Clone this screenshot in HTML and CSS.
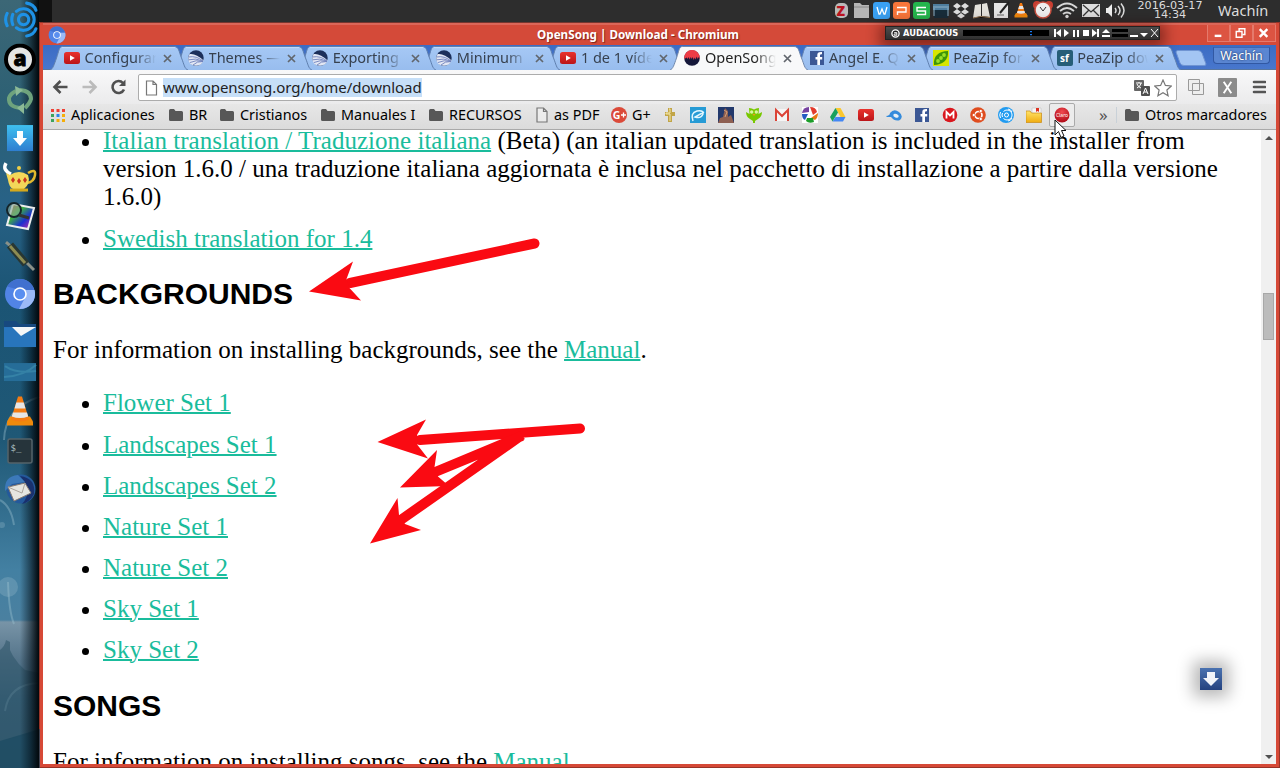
FILE: index.html
```html
<!DOCTYPE html>
<html lang="es">
<head>
<meta charset="utf-8">
<title>OpenSong | Download - Chromium</title>
<link rel="stylesheet" href="styles.css">
</head>
<body>
<svg width="0" height="0" class="defs">
  <defs>
    <linearGradient id="tabg" x1="0" y1="0" x2="0" y2="1"><stop offset="0" stop-color="#a6c8f5"/><stop offset="1" stop-color="#98bdee"/></linearGradient>
    <linearGradient id="yt" x1="0" y1="0" x2="0" y2="1"><stop offset="0" stop-color="#e9322d"/><stop offset="1" stop-color="#bb1519"/></linearGradient>
    <radialGradient id="claro" cx=".5" cy=".3" r=".7"><stop offset="0" stop-color="#f04a50"/><stop offset="1" stop-color="#b00a16"/></radialGradient>
    <linearGradient id="gold" x1="0" y1="0" x2="0" y2="1"><stop offset="0" stop-color="#ffe46a"/><stop offset="1" stop-color="#f0ac10"/></linearGradient>
    <linearGradient id="rain" x1="0" y1="0" x2="1" y2="1"><stop offset="0" stop-color="#e42a1c"/><stop offset=".35" stop-color="#3eb53a"/><stop offset=".65" stop-color="#1b2fd0"/><stop offset="1" stop-color="#e62ba0"/></linearGradient>
    <linearGradient id="sky" x1="0" y1="0" x2="0" y2="1"><stop offset="0" stop-color="#3fc0f0"/><stop offset="1" stop-color="#2e7ed0"/></linearGradient>
    <linearGradient id="navy" x1="0" y1="0" x2="0" y2="1"><stop offset="0" stop-color="#4a72b0"/><stop offset="1" stop-color="#24427f"/></linearGradient>
    <symbol id="tab" viewBox="0 0 138 24"><path d="M0 24C3 23 4 19 6.500 12S9 .5 12.500 .5H124C129 .5 129 6 131.500 12s3 11 6.500 12" fill="url(#tabg)" stroke="#5f7fae"/><path d="M12 1.600H125" stroke="#c2dafb" fill="none"/></symbol>
    <symbol id="tabon" viewBox="0 0 138 24"><path d="M0 24C3 23 4 19 6.500 12S9 .5 12.500 .5H124C129 .5 129 6 131.500 12s3 11 6.500 12" fill="#f8f9fa" stroke="#7088ac"/><path d="M2 24H136" stroke="#f8f9fa" stroke-width="2"/></symbol>
    <symbol id="x" viewBox="0 0 9 9"><path d="M1 1l7 7M8 1l-7 7" stroke="#61666d" stroke-width="1.700"/></symbol>
    <symbol id="youtube" viewBox="0 0 16 16"><rect y="2" width="16" height="12" rx="2.500" fill="url(#yt)"/><path d="M6 5.200v5.600L10.800 8z" fill="#fff"/></symbol>
    <symbol id="globe" viewBox="0 0 16 16"><circle cx="8" cy="8" r="7.700" fill="#1c2f5a"/><path d="M1.500 4Q8 3 15.600 10.500 13.500 15.700 8 15.700 0 15.500 .3 7.500z" fill="#e2e7f4"/><path d="M.5 7q8-1.500 14.500 4M.8 9.800q7-2 14 1.200M2 12.500q6-3 13-1M5 15q4-4 10-3.500" stroke="#6d80bb" fill="none" stroke-width=".9"/></symbol>
    <symbol id="song" viewBox="0 0 16 16"><circle cx="8" cy="8" r="7.800" fill="#15183a"/><path d="M.3 9A7.800 7.800 0 1 1 15.700 9l-1-2-1 2-1-2.500-1 3-1-2-1 2.500-1-3-1 2-1-2-1 2.500-1-2.500-1 2-1-1.500z" fill="#ee3c46"/></symbol>
    <symbol id="fb" viewBox="0 0 16 16"><rect x="1" y="1" width="14" height="14" fill="#3b5794"/><path d="M11 15V9.500h2.200V7H11V5.500c0-1 .4-1.300 2-1.300V2C9.500 1.700 8.300 3 8.300 5v2H6.500v2.500h1.800V15z" fill="#fff"/></symbol>
    <symbol id="pea" viewBox="0 0 16 16"><path fill="#d7e500" d="M0 0h16v16H0z"/><path d="M1 15C0 6 6 1 15 1 16 10 9 15 1 15z" fill="#3e9508"/><circle cx="5" cy="11" r="1.900" fill="#9ae027"/><circle cx="8" cy="8" r="1.900" fill="#9ae027"/><circle cx="11" cy="5" r="1.900" fill="#9ae027"/></symbol>
    <symbol id="sf" viewBox="0 0 16 16"><rect width="16" height="16" rx="2" fill="#265e78"/><text x="3" y="11.500" font-size="10" font-weight="bold" fill="#fff">sf</text></symbol>
    <symbol id="folder" viewBox="0 0 16 14"><path d="M1 2.500Q1 1 2.500 1H6l1.500 2H13.500Q15 3 15 4.500V11.500Q15 13 13.500 13H2.500Q1 13 1 11.500z" fill="#575757"/></symbol>
    <symbol id="page" viewBox="0 0 12 16"><path d="M1 1h6.500L11 4.500V15H1zM7.500 1v3.500H11" fill="#fff" fill-opacity=".35" stroke="#777" stroke-width="1.200"/></symbol>
    <symbol id="chromium" viewBox="0 0 32 32"><circle cx="16" cy="16" r="15" fill="#5184e6"/><path d="M3 8.500A15 15 0 0 1 29 8.500L30 12H16z" fill="#4070cf"/><path d="M30.500 12A15 15 0 0 1 15 31l7-13-1-6z" fill="#9bbaf7"/><circle cx="16" cy="16" r="6.800" fill="#fff"/><circle cx="16" cy="16" r="5.200" fill="#5a8ff0"/></symbol>
    <symbol id="aring" viewBox="0 0 32 32"><circle cx="16" cy="16" r="14" fill="#e5e5e5" stroke="#000" stroke-width="4"/><text x="16" y="22" text-anchor="middle" font-size="21" font-weight="900" fill="#000" stroke="#000" stroke-width=".8">a</text></symbol>
    <symbol id="cone" viewBox="0 0 28 30"><path d="M1 25l3-5h20l3 5v4H1z" fill="#ef8a0c"/><path d="M12 0h4l7 23q-9 4-18 0z" fill="#f57c13"/><path d="M10.300 6h7.400l1.800 6h-11zM7 16h14l1.200 4q-8.200 3-16.400 0z" fill="#e6e6e6"/></symbol>
    <symbol id="waves" viewBox="0 0 34 36"><g fill="none" stroke="#1e92e6"><circle cx="20" cy="18" r="5" stroke-width="3"/><path d="M13 10a10.500 10.500 0 1 1 0 16M9.500 13q-2 5 0 10M23 2q7 1 9 7M23 34q7-1 9-7M4 12q-3 6 0 12" stroke-width="3" stroke-linecap="round"/></g></symbol>
  </defs>
</svg>

<div class="desktop">
  <aside class="dock">
    <svg class="deco" viewBox="0 0 40 768"><g fill="none" stroke="#9cc0d0" stroke-opacity=".4" stroke-width="2"><path d="M39 397Q5 408 4 440M0 500q11 6 14 25M5 711Q9 684 39 683M8 582q1 30 6 42"/></g><g fill="#a1c1d0" fill-opacity=".28"><circle cx="8" cy="587" r="10"/><circle cx="2" cy="525" r="3"/></g><path d="M0 650q5-4 6-10l4 2v8l3 6q5 8 12 14l14 3v60L0 741z" fill="#31566b" fill-opacity=".6"/><path d="M0 741l40-12v39H0z" fill="#194960" fill-opacity=".7"/></svg>
    <div class="shade"></div>
    <svg viewBox="0 0 40 39"><use href="#waves" x="3" y="1" width="35" height="37"/></svg>
    <svg viewBox="0 0 40 39"><use href="#aring" x="4" y="4.500" width="32" height="32"/></svg>
    <svg viewBox="0 0 40 39"><g fill="none" stroke="#6ea37d" stroke-width="4"><path d="M21 30Q8 29 9 20q1-4 7-7"/><path d="M20 12q11 1 11 9-1 4-6 9"/></g><path d="M15 8l8 4-7 6zM24 36l-7-6 7-5z" fill="#8cba96"/></svg>
    <svg viewBox="0 0 40 39"><rect x="7" y="8" width="26" height="26" fill="url(#sky)"/><path d="M17 14h6v7h4l-7 8-7-8h4z" fill="#fff"/></svg>
    <svg viewBox="0 0 40 39"><path d="M11 18Q2 14 6 7" stroke="#fff" stroke-width="3.500" fill="none"/><path d="M28 17q8-5 7 2t-8 8" stroke="#e0b92e" stroke-width="2.500" fill="none"/><path d="M6 17l4 2q9-6 18 0 3 8-4 14H13Q9 31 8 24z" fill="#f3d759"/><circle cx="19" cy="12" r="2" fill="#f0cf45"/><path d="M10 34h18" stroke="#d4a91d" stroke-width="3"/><path d="M13 21l2 3-2 3-2-3zM19 22l2 3-2 3-2-3zM25 21l2 3-2 3-2-3z" fill="#c9341f"/></svg>
    <svg viewBox="0 0 40 39"><path d="M13 9l21 4-6 21-21-4z" fill="url(#rain)" stroke="#eee" stroke-width="2"/><circle cx="14" cy="15" r="7" fill="#8a9" fill-opacity=".6" stroke="#15252a" stroke-width="2"/><path d="M19 20l10 3" stroke="#333" stroke-width="3"/></svg>
    <svg viewBox="0 0 40 39"><path d="M6 7l7 6M26 27l8 8" stroke="#8a9189" stroke-width="3"/><path d="M10 10l16 19" stroke="#283733" stroke-width="8"/><path d="M10 11l15 17" stroke="#8d8c52" stroke-width="3"/></svg>
    <svg viewBox="0 0 40 39"><use href="#chromium" x="4" y="4" width="32" height="32"/></svg>
    <svg viewBox="0 0 40 39"><path d="M4 8h12l3 3h17v5H4z" fill="#17497f"/><path fill="#2875bc" d="M4 14h32v20H4z"/><path d="M12 14h24l-15 9z" fill="#f4f6f7"/></svg>
    <svg viewBox="0 0 40 39"><path fill="#266d98" d="M4 11h32v18H4z"/><path d="M4 25q20-1 32-12M5 14q12 8 31 5" stroke="#3582a6" fill="none" stroke-width="2"/></svg>
    <svg viewBox="0 0 40 39"><use href="#cone" x="6" y="5" width="28" height="31"/></svg>
    <svg viewBox="0 0 40 39"><rect x="8" y="9" width="24" height="24" rx="2" fill="#26343b" stroke="#54636a" stroke-width="1.500"/><text x="10.500" y="21" font-size="9" fill="#b1c2c5" font-family="DejaVu Sans Mono, monospace">$_</text></svg>
    <svg viewBox="0 0 40 39"><circle cx="21" cy="20" r="14.500" fill="#24599b"/><path d="M20 7q16 2 14 18-4 8-12 10 12-13-2-28z" fill="#19316e"/><path d="M5 22Q4 7 18 6l7 7-13 2z" fill="#3c79b9"/><path d="M8 18l17-4 6 10-17 8z" fill="#e5e5e0" stroke="#897c72"/><path d="M8 18l14 6 3-10" fill="none" stroke="#aaa39b"/></svg>
  </aside>

  <header class="panel">
    <div class="tray">
      <svg viewBox="0 0 20 22"><rect x="4" y="3" width="13" height="15" rx="5" fill="#b9b9b9"/><text x="5.500" y="16" font-size="14" font-weight="900" fill="#b9121e">Z</text></svg>
      <svg viewBox="0 0 20 22"><path d="M3 3h6l2 2h7v13H3z" fill="#b5b5b5"/><path d="M3 7h15" stroke="#888"/></svg>
      <svg viewBox="0 0 20 22"><rect x="2" y="2" width="17" height="17" rx="3" fill="#39a0f2"/><path d="M6 7l2 7h1l2-5 2 5h1l2-7" fill="none" stroke="#fff" stroke-width="1.300"/></svg>
      <svg viewBox="0 0 20 22"><rect x="2" y="2" width="17" height="17" rx="3" fill="#f9763a"/><path d="M6 7.500h9V12H6.500v3" fill="none" stroke="#fff" stroke-width="1.400"/></svg>
      <svg viewBox="0 0 20 22"><rect x="2" y="2" width="17" height="17" rx="3" fill="#24b64d"/><path d="M15 7.500H6V11h8.500v3.500H6" fill="none" stroke="#fff" stroke-width="1.400"/></svg>
      <svg viewBox="0 0 20 22"><path fill="#4e7d9d" d="M2 4h16v6H2z"/><path fill="#172d3a" d="M3 10h14v8H3z"/><path d="M2 7h16M3 16V8M17 16V8" stroke="#8fb2c7"/></svg>
      <svg viewBox="0 0 20 22"><path d="M6 3l4 3-4 3-4-3zM14 3l4 3-4 3-4-3zM6 9l4 3-4 2.500L2 12zM14 9l4 3-4 2.500-4-2.500zM10 13l4 3-4 2.500L6 16z" fill="#ddd"/></svg>
      <svg viewBox="0 0 20 22"><path d="M4 5l6-1v12l-8 2zM11 4l5-1 3 14-8-1z" fill="#e4e2dc"/><path d="M2 18l8-1.500 9 1" stroke="#9b7e5a"/></svg>
      <svg viewBox="0 0 20 22"><rect x="3" y="3" width="14" height="15" fill="#e5e5e5"/><path d="M6 15h7" stroke="#666"/><path d="M18 2l-9 11" stroke="#222" stroke-width="2"/></svg>
      <svg viewBox="0 0 20 22"><use href="#cone" x="3" y="2" width="14" height="17"/></svg>
      <svg viewBox="0 0 24 22"><circle cx="6" cy="5" r="4" fill="#c83e31"/><circle cx="18" cy="5" r="4" fill="#c83e31"/><circle cx="12" cy="10" r="8" fill="#eee" stroke="#c95040" stroke-width="1.500"/><path d="M9 7l3 4 3-4" stroke="#333" fill="none"/></svg>
      <svg viewBox="0 0 24 22"><g fill="none" stroke="#d7d7d7" stroke-width="1.800"><path d="M2 8q10-9 20 0M5 11q7-6 14 0M8 14q4-3 8 0"/></g><circle cx="12" cy="16.500" r="1.700" fill="#ddd"/></svg>
      <svg viewBox="0 0 24 22"><rect x="3" y="4" width="18" height="13" fill="#ddd"/><path d="M4 5l8 7 8-7M4 16l6-6M20 16l-6-6" fill="none" stroke="#333" stroke-width="1.300"/></svg>
      <svg viewBox="0 0 24 22"><path d="M3 8h2l4-4v13l-4-4H3z" fill="#eee"/><path d="M12 8q2 2.500 0 5M15 6q4 4.500 0 9M18 3.500q6 7 0 14" fill="none" stroke="#ddd" stroke-width="1.500"/></svg>
    </div>
    <div class="clock">2016-03-17<br>14:34</div>
    <div class="user">Wachín</div>
  </header>

  <main class="window">
    <div class="titlebar">
      <svg class="appicon" viewBox="0 0 32 32"><use href="#chromium"/></svg>
      <div class="title">OpenSong | Download - Chromium</div>
      <div class="winbtns">
        <span><svg viewBox="0 0 22 16"><path d="M7 11h7" stroke="#fff" stroke-width="2.500"/></svg></span>
        <span><svg viewBox="0 0 22 16"><path d="M8.500 6V3.500h6v6H12" fill="none" stroke="#fff" stroke-width="1.500"/><path d="M5.500 6.500h6v6h-6z" fill="none" stroke="#fff" stroke-width="1.500"/></svg></span>
        <span><svg viewBox="0 0 22 16"><path d="M6 4l8 8M14 4l-8 8" stroke="#fff" stroke-width="2.500"/></svg></span>
      </div>
    </div>
    <nav class="tabs">
      <div class="tab"><svg class="shape"><use href="#tab"/></svg><svg class="fav"><use href="#youtube"/></svg><span>Configurar</span><svg class="close"><use href="#x"/></svg></div>
      <div class="tab"><svg class="shape"><use href="#tab"/></svg><svg class="fav"><use href="#globe"/></svg><span>Themes — </span><svg class="close"><use href="#x"/></svg></div>
      <div class="tab"><svg class="shape"><use href="#tab"/></svg><svg class="fav"><use href="#globe"/></svg><span>Exporting</span><svg class="close"><use href="#x"/></svg></div>
      <div class="tab"><svg class="shape"><use href="#tab"/></svg><svg class="fav"><use href="#globe"/></svg><span>Minimum</span><svg class="close"><use href="#x"/></svg></div>
      <div class="tab"><svg class="shape"><use href="#tab"/></svg><svg class="fav"><use href="#youtube"/></svg><span>1 de 1 víde</span><svg class="close"><use href="#x"/></svg></div>
      <div class="tab on"><svg class="shape"><use href="#tabon"/></svg><svg class="fav"><use href="#song"/></svg><span>OpenSong</span><svg class="close"><use href="#x"/></svg></div>
      <div class="tab"><svg class="shape"><use href="#tab"/></svg><svg class="fav"><use href="#fb"/></svg><span>Angel E. Q</span><svg class="close"><use href="#x"/></svg></div>
      <div class="tab"><svg class="shape"><use href="#tab"/></svg><svg class="fav"><use href="#pea"/></svg><span>PeaZip for</span><svg class="close"><use href="#x"/></svg></div>
      <div class="tab"><svg class="shape"><use href="#tab"/></svg><svg class="fav"><use href="#sf"/></svg><span>PeaZip dow</span><svg class="close"><use href="#x"/></svg></div>
      <svg class="newtab" viewBox="0 0 32 16"><path d="M3 .5H23Q26 .5 27 3L31 14Q31 15.500 29 15.500H9Q6 15.500 5 13L1 2Q1 .5 3 .5z" fill="#a3c5f3" stroke="#6f94d2"/></svg>
      <button class="profile">Wachín</button>
    </nav>
    <div class="toolbar">
      <svg class="tb" viewBox="0 0 16 16"><path d="M15 8H3M8 2L2 8l6 6" fill="none" stroke="#505050" stroke-width="2.600"/></svg>
      <svg class="tb" viewBox="0 0 16 16"><path d="M1 8h12M8 2l6 6-6 6" fill="none" stroke="#bbb" stroke-width="2.600"/></svg>
      <svg class="tb" viewBox="0 0 16 16"><path d="M13.500 10.500A6 6 0 1 1 12.500 4" fill="none" stroke="#505050" stroke-width="2.600"/><path d="M15 .5V7H8.500z" fill="#505050"/></svg>
      <div class="omnibox">
        <svg class="pg"><use href="#page"/></svg>
        <span class="url">www.opensong.org/home/download</span>
        <svg class="trans" viewBox="0 0 16 16"><rect width="10" height="11" rx="1" fill="#666"/><path d="M2 3h6M5 2v1M3 8q4-2 4-5M3 4q1 3 4 4" stroke="#fff" fill="none"/><rect x="7" y="6" width="9" height="10" rx="1" fill="#4f4f4f"/><path d="M9 14l2.500-6 2.500 6M10 12h3" fill="none" stroke="#fff"/></svg>
        <svg class="star" viewBox="0 0 18 18"><path d="M9 1l2.400 5.400 5.900.6-4.400 4 1.200 5.800L9 13.800l-5.100 3 1.200-5.800-4.400-4 5.900-.6z" fill="#fff" stroke="#777" stroke-width="1.200"/></svg>
      </div>
      <svg class="copy" viewBox="0 0 16 16"><path d="M.5.5h11v11H.5zM4.500 4.500h11v11h-11z" fill="#eee" stroke="#999"/></svg>
      <svg class="xext" viewBox="0 0 20 20"><rect width="20" height="20" rx="1" fill="#8b8b8b"/><path d="M6 4l8 12M14 4L6 16" stroke="#fff" stroke-width="2"/></svg>
      <svg class="menu" viewBox="0 0 14 14"><path d="M2 2h11M2 7h11M2 12h11" stroke="#555" stroke-width="2.600" stroke-linecap="round"/></svg>
    </div>
    <div class="bookmarks">
      <div class="bm w1"><svg viewBox="0 0 16 16"><path fill="#ee4035" d="M1 2h3v3H1zM6.500 2h3v3h-3zM12 2h3v3h-3z"/><path fill="#3da35d" d="M1 7h3v3H1zM1 12h3v3H1z"/><path fill="#2a85e8" d="M6.500 7h3v3h-3z"/><path fill="#f5ae08" d="M12 7h3v3h-3zM6.500 12h3v3h-3zM12 12h3v3h-3z"/></svg>Aplicaciones</div>
      <div class="bm w2"><svg><use href="#folder"/></svg>BR</div>
      <div class="bm w3"><svg><use href="#folder"/></svg>Cristianos</div>
      <div class="bm w4"><svg><use href="#folder"/></svg>Manuales I</div>
      <div class="bm w4"><svg><use href="#folder"/></svg>RECURSOS</div>
      <div class="bm w6"><svg class="doc"><use href="#page"/></svg>as PDF</div>
      <div class="bm w7"><svg viewBox="0 0 16 16"><circle cx="8" cy="8" r="8" fill="#db4a39"/><text x="1.700" y="12" font-size="10.500" font-weight="bold" fill="#fff">G</text><path d="M10 8h5M12.500 5.500v5" stroke="#fff" stroke-width="1.300"/></svg>G+</div>
      <div class="icons">
        <svg viewBox="0 0 16 16"><path d="M6 1h4v4h3v4h-3v6H6V9H3V5h3z" fill="#c1a548"/><path d="M7 2h1v4H4v1h4v7" fill="none" stroke="#f4e7a6"/></svg>
        <svg viewBox="0 0 16 16"><path fill="#269bd5" d="M0 0h16v16H0z"/><path d="M3 14Q0 6 7 4q7-1 6 3-2 5-8 3l9-5" fill="none" stroke="#e2f7ff" stroke-width="1.500"/></svg>
        <svg viewBox="0 0 16 16"><path fill="#23396c" d="M0 0h16v16H0z"/><path d="M0 16l2-5 3-1 2-9 3 3v6l3-2 3 8z" fill="#8e6052"/><path d="M6 3l3 2-2 5" stroke="#d5a078" fill="none"/></svg>
        <svg viewBox="0 0 16 16"><path d="M3 1q3 0 5 1.500Q10 1 13 1l-.5 6L16 5q0 5-4 7l-3 2v2H7v-2l-3-2Q0 10 0 5l3.500 2z" fill="#78c800"/><circle cx="5.700" cy="5" r="1.700" fill="#d9f6a1"/><circle cx="10.300" cy="5" r="1.700" fill="#d9f6a1"/><path d="M6.500 7h3L8 9z" fill="#f5981d"/></svg>
        <svg viewBox="0 0 16 16"><path fill="#f5f5f5" d="M1 2h14v12H1z"/><path d="M2 14V3l6 6 6-6v11" fill="none" stroke="#db4437" stroke-width="2"/></svg>
        <svg viewBox="0 0 16 16"><path fill="#fff" d="M0 0h16v16H0z"/><path d="M7 0Q1 0 0 6l7-1z" fill="#7642a0"/><path d="M8 0q6 0 7 5l-4 3z" fill="#e23b2d"/><path d="M16 6q0 5-3 7L9 11z" fill="#e87813"/><path d="M12 15q-5 2-8-1l1-3h6z" fill="#1c9d2a"/><path d="M0 7q0 5 3 6l3-6z" fill="#245bc2"/></svg>
        <svg viewBox="0 0 16 16"><path d="M5.500 1h5l5 9h-5z" fill="#fbc72f"/><path d="M5.500 1L0 10l2.500 4.500L8 5.500z" fill="#18a05e"/><path d="M5.500 10h10L13 14.500H2.500z" fill="#4487f4"/></svg>
        <svg><use href="#youtube"/></svg>
        <svg viewBox="0 0 16 16"><path d="M0 9q4-.5 4-3 4-5 9-1 5 4 1 8-5 2-9-3H1z" fill="#348bdc"/><ellipse cx="10" cy="8.800" rx="2.800" ry="1.800" fill="#e8f0f6" transform="rotate(20 10 8.800)"/></svg>
        <svg><use href="#fb"/></svg>
        <svg viewBox="0 0 16 16"><circle cx="8" cy="8" r="7.300" fill="#d9171e"/><path d="M4.500 11.500V5L8 8.500 11.500 5v6.500" stroke="#fff" stroke-width="1.800" fill="none"/></svg>
        <svg viewBox="0 0 16 16"><circle cx="8" cy="8" r="7.800" fill="#df4c1e"/><circle cx="8.500" cy="8" r="3.500" fill="none" stroke="#fff" stroke-width="1.700"/><g fill="#fff" stroke="#df4c1e" stroke-width=".7"><circle cx="3.800" cy="8" r="1.600"/><circle cx="10.800" cy="4" r="1.600"/><circle cx="10.800" cy="12" r="1.600"/></g></svg>
        <svg viewBox="0 0 16 16"><circle cx="8" cy="8" r="8" fill="#219bf0"/><g fill="none" stroke="#fff"><circle cx="8.500" cy="8" r="2"/><path d="M5.500 4.500a5 5 0 1 1 0 7M4.500 6q-1 2 0 4M2.500 5q-1.500 3 0 6M10 2q3 .5 4 3M10 14q3-.5 4-3"/></g></svg>
        <svg viewBox="0 0 16 16"><path d="M6 1h9v8H6z" fill="#f6f6f6" stroke="#bbb" stroke-width=".5"/><path d="M10 1h3v4l-1.500-1L10 5z" fill="#d32"/><path d="M0 4h4l1.500 2H15.500v9.500H0z" fill="url(#gold)" stroke="#c88a16" stroke-width=".7"/></svg>
        <span class="hover"><svg viewBox="0 0 16 16"><circle cx="8" cy="8" r="7.500" fill="url(#claro)"/><text x="8" y="10" text-anchor="middle" font-size="5" fill="#fff">Claro</text></svg></span>
      </div>
      <div class="more">»</div>
      <div class="bm other"><svg><use href="#folder"/></svg>Otros marcadores</div>
    </div>
    <div class="view">
      <article class="page">
        <ul class="tr">
          <li><span class="l1"><a>Italian translation / Traduzione italiana</a> (Beta) (an italian updated translation is included in the installer from</span><br>version 1.6.0 / una traduzione italiana aggiornata è inclusa nel pacchetto di installazione a partire dalla versione<br>1.6.0)</li>
          <li><a>Swedish translation for 1.4</a></li>
        </ul>
        <h2>BACKGROUNDS</h2>
        <p>For information on installing backgrounds, see the <a>Manual</a>.</p>
        <ul class="sets">
          <li><a>Flower Set 1</a></li>
          <li><a>Landscapes Set 1</a></li>
          <li><a>Landscapes Set 2</a></li>
          <li><a>Nature Set 1</a></li>
          <li><a>Nature Set 2</a></li>
          <li><a>Sky Set 1</a></li>
          <li><a>Sky Set 2</a></li>
        </ul>
        <h2>SONGS</h2>
        <p>For information on installing songs, see the <a>Manual</a>.</p>
      </article>
      <div class="scroll"><i class="up"></i><b></b><i class="down"></i></div>
    </div>
  </main>

  <div class="player"><svg class="pa" viewBox="0 0 10 10"><circle cx="5" cy="5" r="4" fill="#222" stroke="#fff" stroke-width="1.500"/><path d="M3.500 4h3v3h-3V5.500h3" fill="none" stroke="#fff"/></svg><strong>AUDACIOUS</strong><span class="lcd"><svg viewBox="0 0 86 6"><path d="M67 1h2v1.300h-2zM67 4h2v1.300h-2z" fill="#1978f0"/></svg></span><svg class="ctl" viewBox="0 0 106 12"><path d="M1 2h2v8H1zM8 2v8L3 6zM11 2l5 4-5 4zM20 3h2v7h-2zM24 3h2v7h-2zM30 3h6v6h-6zM39 2l5 4-5 4zM44 2h2v8h-2zM49 6l4-4 4 4zM49 8h8v2h-8z" fill="#fff"/><path fill="#000" d="M59 2h16v3H59zM59 7h16v3H59z"/><path d="M77 8h8v2h-8zM87 6h8l-4 4z" fill="#fff"/><path d="M98 2l7 8M105 2l-7 8" stroke="#fff"/></svg></div>

  <svg class="arrows" viewBox="0 0 1280 768">
    <g stroke="#fa0a12" stroke-width="10"><path stroke-linecap="round" d="M350 283L534.500 243.500M420 440L580 428.500"/><path d="M434 472.500L522 436M400 520.500L522 435"/></g>
    <path fill="#fa0a12" d="M309 291.500l44-30-6.500 17.500 3 9 11.500 12.500zM377.500 442l48.500-22.500-9 15.500.5 10 10.500 13.500zM400 487.500l37-37.500-2.500 17 3.500 9.500 11 9.500zM370 543.500l27.500-45.500 1.500 17 6 9 16 6z"/>
  </svg>
  <div class="jump"><svg viewBox="0 0 22 22"><path fill="url(#navy)" d="M0 0h22v22H0z"/><path d="M7 4h8v6h4l-8 8-8-8h4z" fill="#f1f4f9"/></svg></div>
  <svg class="cursor" viewBox="0 0 14 20"><path d="M1 1v15l3.500-3.500L7 18.500l3-1.500-2.500-5.500H12z" fill="#fff" stroke="#111"/></svg>
</div>
</body>
</html>
```
FILE: styles.css
```css
* { box-sizing: border-box; }
body { margin: 0; font-family: "Noto Sans", sans-serif; }
.defs { position: absolute; }
svg { display: block; flex: none; }
.desktop { position: relative; width: 1280px; height: 768px; overflow: hidden; display: grid; grid-template-columns: 39px 1241px; grid-template-rows: 22px 746px; background: #111; }

.dock { position: relative; grid-row: 1 / 3; display: flex; flex-direction: column; background: linear-gradient(#3c6776 0, #2c6074 110px, #286286 200px, #1b5474 300px, #1f5876 440px, #4380a2 570px, #4a80a0 620px, #7894a7 622px, #54748a 660px, #38617a 700px, #32596e 768px); }
.dock svg { position: relative; width: 40px; height: 39.1px; overflow: visible; }
.dock .deco { position: absolute; left: 0; top: 0; height: 768px; }
.shade { position: absolute; inset: 0; background: linear-gradient(90deg, transparent 20px, rgba(0,12,20,.5) 30px, #02080c 39px); }

.panel { margin-left: 13px; display: flex; background: #2d2d2d; color: #dcdcdc; position: relative; }
.tray { display: flex; margin-left: 779px; }
.tray svg { width: 20px; height: 22px; }
.tray svg:nth-child(n+11) { width: 24px; }
.clock { width: 84px; margin-left: 1px; margin-top: 1px; font-size: 11.200px; line-height: 9px; text-align: center; font-family: "DejaVu Sans", sans-serif; }
.user { margin-left: 6px; font-size: 14.600px; line-height: 20px; }

.window { background: #d44a39; border-left: 4px solid #d64937; border-right: 4px solid #d64937; border-bottom: 4px solid #d64937; box-shadow: inset 0 1px #8e3127, inset 0 2px #e2796b; outline: 1px solid #973327; outline-offset: -1px; display: flex; flex-direction: column; min-height: 0; }
.titlebar { height: 23px; display: flex; align-items: center; position: relative; box-shadow: inset 0 1px #75362f, inset 0 3px #dc6658; }
.appicon { width: 18px; height: 18px; margin-left: 5px; margin-top: 2px; }
.title { flex: 1; text-align: center; color: #fff; font-size: 11.700px; font-weight: bold; text-shadow: 1px 1px 1px #7c241a; line-height: 20px; margin-right: -64px; }
.winbtns { display: flex; margin-left: 61px; }
.winbtns span { width: 23px; height: 17px; border: 1px solid #e57a6c; border-top: 0; background: #dc5442; }
.winbtns svg { width: 21px; height: 16px; }

.tabs { height: 25px; padding: 1px 0 0 9px; display: flex; position: relative; background: linear-gradient(#3b6cc4, #4877cd); box-shadow: inset 0 -1px #58779f; }
.tab { position: relative; width: 124.100px; height: 24px; display: flex; align-items: center; padding-left: 12px; font-size: 14.500px; color: #37414f; }
.tab:nth-child(1) { z-index: 9; } .tab:nth-child(2) { z-index: 8; } .tab:nth-child(3) { z-index: 7; } .tab:nth-child(4) { z-index: 6; } .tab:nth-child(5) { z-index: 5; } .tab:nth-child(7) { z-index: 4; } .tab:nth-child(8) { z-index: 3; } .tab:nth-child(9) { z-index: 2; }
.tab.on { z-index: 20; color: #222; }
.shape { position: absolute; left: -2px; top: 0; width: 138px; height: 24px; }
.fav { position: relative; width: 16px; height: 16px; }
.tab span { position: relative; top: -1px; width: 71px; margin-left: 4.500px; overflow: hidden; white-space: pre; -webkit-mask-image: linear-gradient(90deg, #000 70%, transparent); mask-image: linear-gradient(90deg, #000 70%, transparent); }
.close { position: relative; width: 9px; height: 9px; margin-left: 7px; }
.newtab { width: 32px; height: 16px; margin: 4px 0 0 6px; }
.profile { margin: 1px 0 0 6px; padding: 0; width: 57px; height: 17px; border: 1px solid #3158a3; border-top-color: #3c66b5; border-radius: 0 0 4px 4px; background: #5a86d2; color: #fff; font: 12.300px/15px "Noto Sans", sans-serif; text-shadow: 0 0 2px #0a1f49; }

.toolbar { height: 34px; display: flex; align-items: center; background: linear-gradient(#f8f8f9, #ebebec); padding-left: 9px; }
.tb { width: 17px; height: 16px; margin-right: 12px; }
.omnibox { width: 1039px; height: 27px; margin-top: 1px; margin-left: -1px; border: 1px solid #acacac; border-radius: 2px; background: #fff; display: flex; align-items: center; padding-left: 6px; }
.pg { width: 13px; height: 16px; }
.url { margin-left: 5px; background: #c6dff8; color: #222; font-size: 15px; line-height: 19px; letter-spacing: -.03px; }
.trans { width: 16px; height: 16px; margin-left: auto; }
.star { width: 18px; height: 18px; margin: 0 4px 0 4px; }
.copy { width: 16px; height: 16px; margin-left: 11px; }
.xext { width: 19px; height: 19px; margin-left: 14px; }
.menu { width: 14px; height: 14px; margin-left: 15px; }

.bookmarks { height: 26px; display: flex; align-items: center; padding: 0 0 4px 7px; background: linear-gradient(#e7e7e7, #dbdbdb); border-bottom: 1px solid #a9a9a9; color: #000; font-size: 14.400px; line-height: 20px; white-space: nowrap; }
.bm { display: flex; align-items: center; gap: 5px; flex: none; }
.bm svg { width: 16px; height: 16px; }
.bm .doc { width: 12px; margin-right: 1px; }
.w1 { width: 118px; } .w2 { width: 51px; } .w3 { width: 101px; } .w4 { width: 108px; } .w6 { width: 75px; } .w7 { width: 51px; }
.icons { display: flex; align-items: center; gap: 12px; }
.icons svg { width: 16px; height: 16px; }
.hover { display: block; margin: -4px -5px; padding: 3px 4px; border: 1px solid #aaa; border-radius: 2px; background: #ececec; }
.more { width: 18px; margin-left: 29px; font-size: 17px; color: #555; line-height: 16px; border-right: 1px solid #c9d1d8; }
.other { margin-left: 7px; }

.view { flex: 1; min-height: 0; display: flex; background: #fff; overflow: hidden; }
.page { flex: 1; padding-left: 10px; font: 25px/28px "Liberation Serif", serif; color: #000; }
.page ul { margin: 0; padding-left: 50px; }
.page a { color: #1abc9c; text-decoration: underline; text-decoration-thickness: 2px; }
.page .tr { margin-top: -3px; white-space: nowrap; }
.l1 { letter-spacing: .018px; }
.tr li { margin-bottom: 14px; }
.sets li { height: 41px; }
.sets li:first-child { height: 42px; }
h2 { font: bold 30px/34px "Liberation Sans", sans-serif; margin: 0; }
.tr + h2 { margin-top: 24px; }
.page p { margin: 25px 0; }
.sets + h2 { margin-top: 12px; }
.scroll { width: 15px; background: #f0f0f0; display: flex; flex-direction: column; align-items: center; }
.scroll i { border: 4px solid transparent; }
.scroll .up { border-bottom-color: #505050; margin-top: 2px; }
.scroll .down { border-top-color: #505050; margin-top: auto; margin-bottom: 1px; }
.scroll b { width: 11px; height: 47px; margin-top: 153px; background: #bcbcbc; border: 1px solid #a8a8a8; }

.player { position: absolute; left: 885px; top: 26px; width: 275px; height: 14px; display: flex; align-items: center; padding-left: 5px; background: linear-gradient(#4c4c4c, #303030); border: 1px solid #222; box-shadow: 0 3px 14px 5px rgba(40,0,0,.45); color: #fff; font: 9px "DejaVu Sans", sans-serif; }
.pa { width: 9px; height: 9px; margin-right: 3px; }
.player strong { width: 60px; font-size: 8.300px; }
.lcd { width: 86px; height: 6px; background: #000; }
.ctl { width: 106px; height: 12px; margin-left: 4px; }
.arrows { position: absolute; left: 0; top: 0; width: 1280px; height: 768px; fill: none; pointer-events: none; }
.jump { position: absolute; left: 1200px; top: 668px; width: 22px; height: 22px; box-shadow: 0 0 16px 7px rgba(0,0,0,.28); }
.cursor { position: absolute; left: 1054px; top: 119px; width: 14px; height: 20px; }
```
